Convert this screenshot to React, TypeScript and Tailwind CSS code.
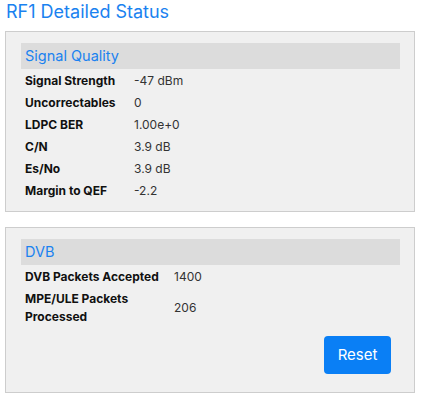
import React from 'react';

type Row = { label: string; value: string };

const signalRows: Row[] = [
  { label: 'Signal Strength', value: '-47 dBm' },
  { label: 'Uncorrectables', value: '0' },
  { label: 'LDPC BER', value: '1.00e+0' },
  { label: 'C/N', value: '3.9 dB' },
  { label: 'Es/No', value: '3.9 dB' },
  { label: 'Margin to QEF', value: '-2.2' },
];

const dvbRows: Row[] = [
  { label: 'DVB Packets Accepted', value: '1400' },
  { label: 'MPE/ULE Packets Processed', value: '206' },
];

const SectionHeader: React.FC<{ title: string }> = ({ title }) => (
  <div className="h-[26px] bg-[#dcdcdc] pl-1 flex items-center text-[14.5px] text-[#1a82f0]">
    {title}
  </div>
);

const App: React.FC = () => {
  return (
    <div className="w-[423px] h-[401px] bg-white px-[5px] font-['Inter',sans-serif] text-[#222]">
      <h1 className="pl-[1px] text-[18px] leading-[24px] text-[#1a82f0]">RF1 Detailed Status</h1>

      <div className="mt-[7px] w-[410px] border border-[#cdcdcd] bg-[#f0f0f0] pl-[15px] pr-[14px] pt-[11px] pb-[10px]">
        <SectionHeader title="Signal Quality" />
        <div className="grid grid-cols-[109px_1fr] pl-1 text-[12px]">
          {signalRows.map((r) => (
            <React.Fragment key={r.label}>
              <div className="h-[22px] pt-[1px] flex items-center font-bold text-[#111]">{r.label}</div>
              <div className="h-[22px] pt-[1px] flex items-center text-[#333]">{r.value}</div>
            </React.Fragment>
          ))}
        </div>
      </div>

      <div className="mt-[15px] w-[410px] border border-[#cdcdcd] bg-[#f0f0f0] pl-[15px] pr-[14px] pt-[11px] pb-[18px]">
        <SectionHeader title="DVB" />
        <div className="grid grid-cols-[149px_1fr] pl-1 text-[12px]">
          <div className="h-[22px] pt-[1px] flex items-center font-bold text-[#111]">{dvbRows[0].label}</div>
          <div className="h-[22px] pt-[1px] flex items-center text-[#333]">{dvbRows[0].value}</div>
          <div className="pt-[3px] pb-[2px] pr-[30px] leading-[18px] font-bold text-[#111]">{dvbRows[1].label}</div>
          <div className="flex items-center text-[#333]">{dvbRows[1].value}</div>
        </div>
        <div className="mt-[8px] flex justify-end pr-[9px]">
          <button className="w-[67px] h-[38px] rounded-[4px] bg-[#0a7ff5] text-white text-[15px]">
            Reset
          </button>
        </div>
      </div>
    </div>
  );
};

export default App;
